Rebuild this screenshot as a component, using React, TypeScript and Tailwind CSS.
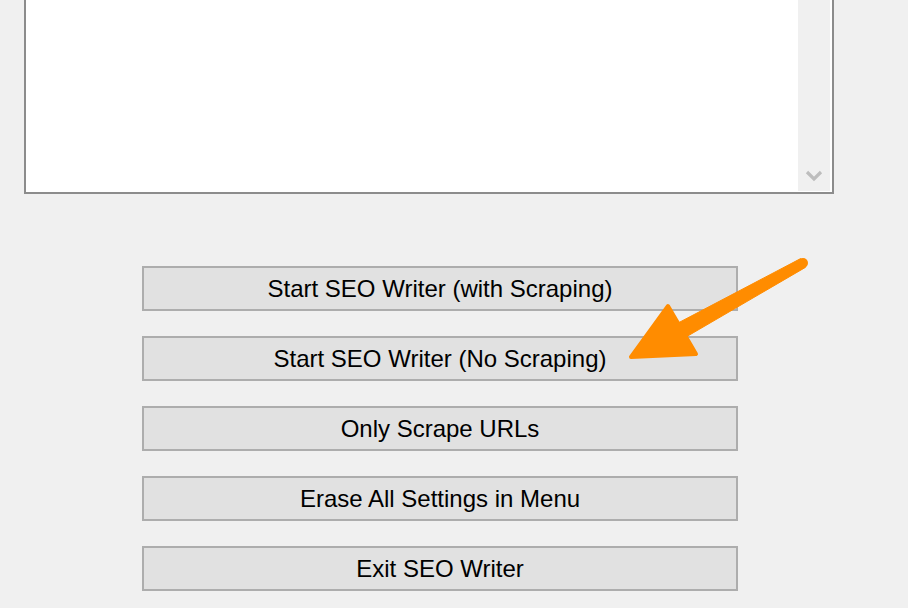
import React from "react";

const buttons = [
  "Start SEO Writer (with Scraping)",
  "Start SEO Writer (No Scraping)",
  "Only Scrape URLs",
  "Erase All Settings in Menu",
  "Exit SEO Writer",
];

export default function App() {
  return (
    <div
      className="relative w-[908px] h-[608px] overflow-hidden bg-[#f0f0f0]"
      style={{ fontFamily: '"Liberation Sans", Arial, sans-serif' }}
    >
      {/* text area */}
      <div className="ml-[24px] mt-[-8px] w-[810px] h-[202px] border-l-[2px] border-b-[2px] border-r-[2px] border-[#8c8c8c] bg-white flex justify-end">
        <div className="w-[32px] mr-[2px] mb-[1px] bg-[#f0f0f0] flex flex-col justify-end items-center pb-[9px]">
          <svg width="18" height="13" viewBox="0 0 18 13">
            <path d="M2 3 L9 10 L16 3" fill="none" stroke="#bdbdbd" strokeWidth="3.2" />
          </svg>
        </div>
      </div>

      {/* buttons */}
      <div className="ml-[142px] mt-[72px] w-[596px] flex flex-col gap-[25px]">
        {buttons.map((b) => (
          <div
            key={b}
            className="h-[45px] border-[2px] border-[#adadad] bg-[#e1e1e1] flex items-center justify-center text-[24px] leading-none text-black"
          >
            {b}
          </div>
        ))}
      </div>

      {/* arrow */}
      <svg className="absolute left-0 top-0" width="908" height="608">
        <path
          d="M678 323 L686 337 L805.4 267.4 L800.6 258.6 Z"
          fill="#ff8c00"
          stroke="#ff8c00"
          strokeWidth="1"
          strokeLinejoin="round"
        />
        <circle cx="803" cy="263" r="5" fill="#ff8c00" />
        <path
          d="M631 357 L668 306 L696 354 Z"
          fill="#ff8c00"
          stroke="#ff8c00"
          strokeWidth="4"
          strokeLinejoin="round"
        />
      </svg>
    </div>
  );
}
